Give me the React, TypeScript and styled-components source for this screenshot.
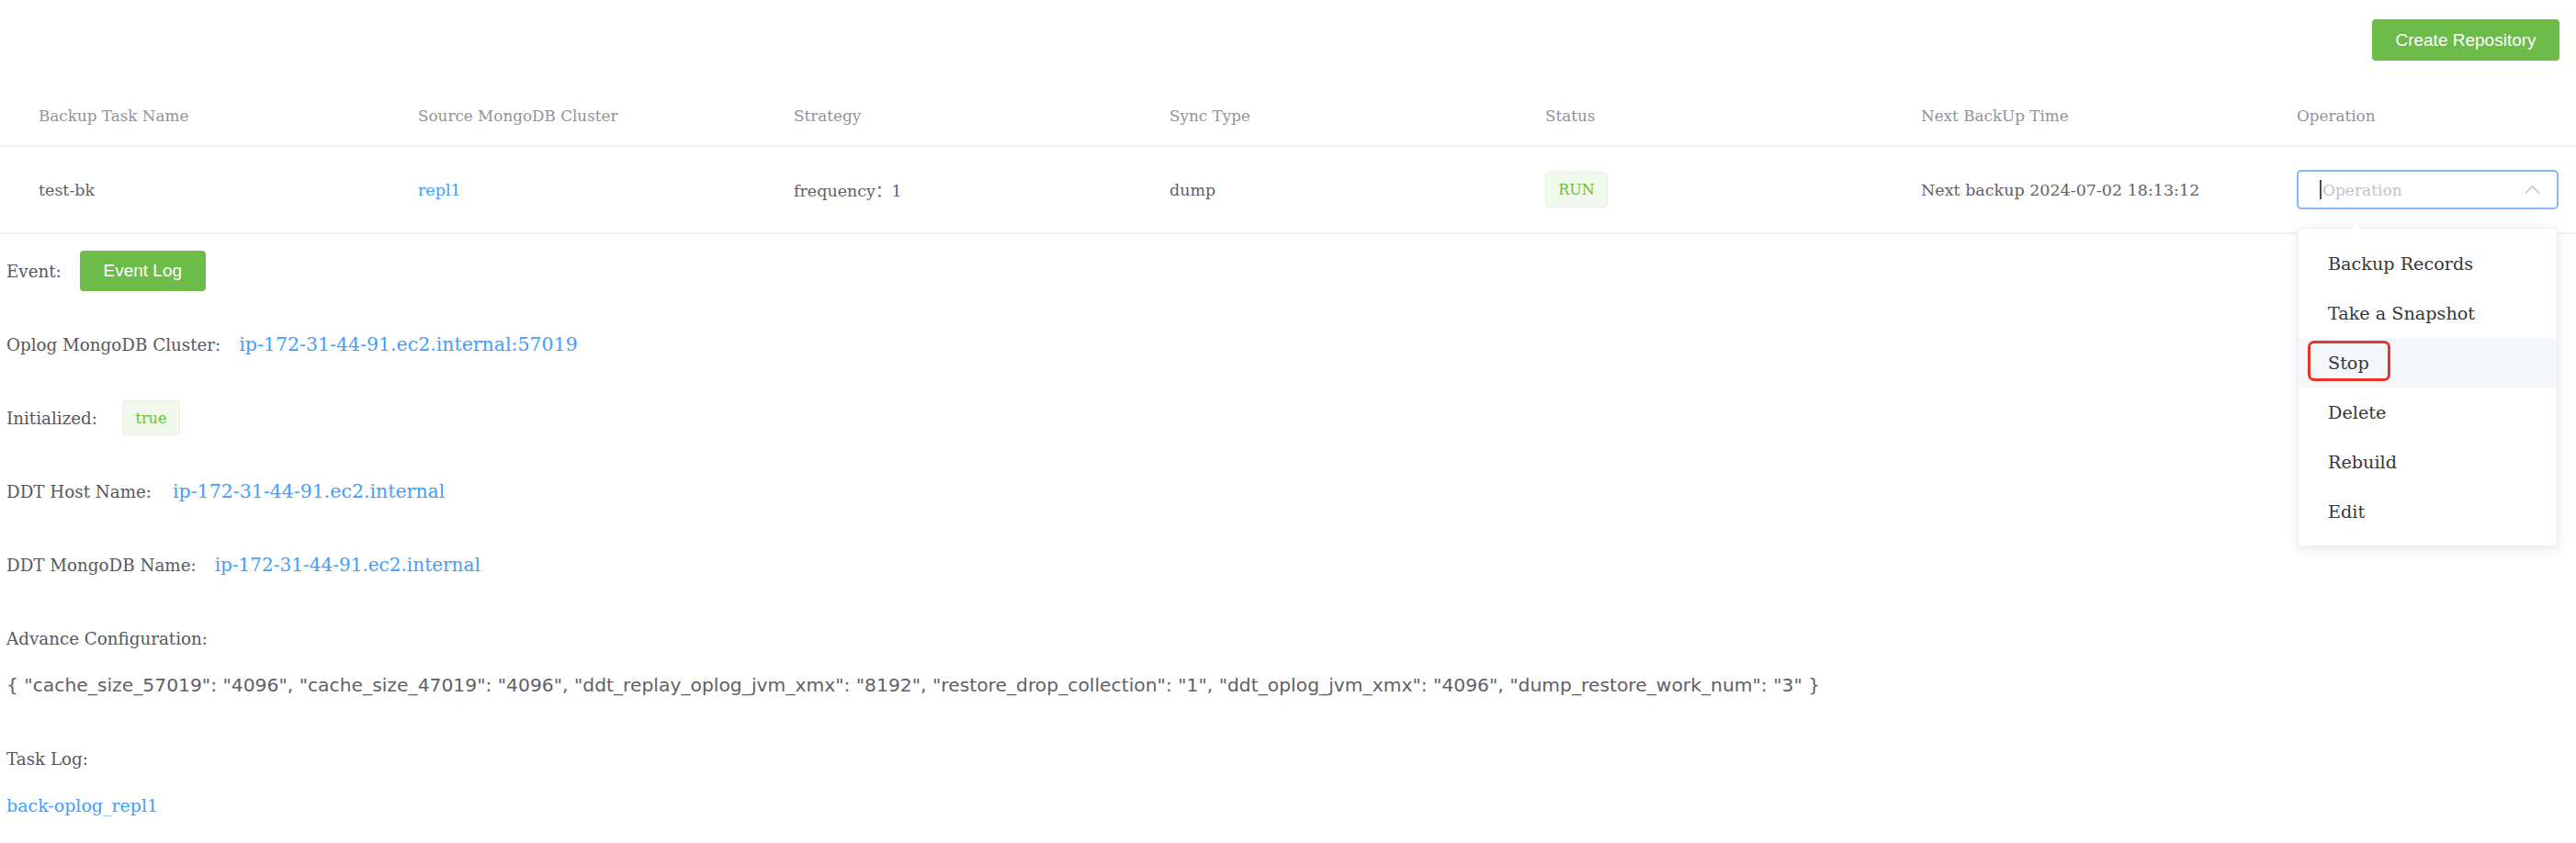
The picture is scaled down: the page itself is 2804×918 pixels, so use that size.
import React from "react";
import styled, { createGlobalStyle } from "styled-components";

const SERIF = `"DejaVu Serif", "Noto Sans CJK SC", serif`;
const SANS = `"Liberation Sans", Arial, sans-serif`;
const JSONFONT = `"DejaVu Sans", "Noto Sans", sans-serif`;

const GlobalStyle = createGlobalStyle`
  html, body { margin: 0; padding: 0; background: #ffffff; }
  body { font-family: ${SERIF}; color: #606266; }
  * { box-sizing: border-box; }
`;

const Page = styled.div`
  width: 2804px;
  min-height: 918px;
`;

const Toolbar = styled.div`
  display: flex;
  justify-content: flex-end;
  padding: 21px 18px 0 0;
  margin-bottom: 28px;
`;

const GreenButton = styled.button<{ $w: number; $h: number }>`
  width: ${(p) => p.$w}px;
  height: ${(p) => p.$h}px;
  display: inline-flex;
  align-items: center;
  justify-content: center;
  padding: 0;
  background: #6dbb49;
  color: #ffffff;
  border: 0;
  border-radius: 4px;
  font-family: ${SANS};
  font-size: 19px;
  cursor: pointer;
`;

const Row = styled.div<{ $head?: boolean }>`
  display: grid;
  grid-template-columns: 413px 409px 409px 409px 409px 409px 1fr;
  align-items: center;
  height: ${(p) => (p.$head ? 66 : 95)}px;
  padding: 0 18px 0 42px;
  border-bottom: 2px solid #eef0f5;
  font-size: ${(p) => (p.$head ? 16.8 : 17.5)}px;
  color: ${(p) => (p.$head ? "#909399" : "#5f6166")};
`;

const Cell = styled.div`
  white-space: nowrap;
`;

const Link = styled.a<{ $size?: number }>`
  color: #409eff;
  text-decoration: none;
  ${(p) => (p.$size ? `font-size: ${p.$size}px;` : "")}
`;

const Tag = styled.span<{ $w: number; $h: number }>`
  display: inline-flex;
  align-items: center;
  justify-content: center;
  width: ${(p) => p.$w}px;
  height: ${(p) => p.$h}px;
  background: #f0f9eb;
  border: 1px solid #e1f3d8;
  border-radius: 4px;
  color: #67c23a;
  font-size: 16px;
`;

const SelectWrap = styled.div`
  position: relative;
  width: 285px;
`;

const SelectBox = styled.div`
  height: 43px;
  border: 2px solid #84b9f5;
  border-radius: 5px;
  display: flex;
  align-items: center;
  justify-content: space-between;
  padding: 0 18px 0 23px;
  background: #fff;
`;

const Placeholder = styled.span`
  display: flex;
  align-items: center;
  color: #c0c4cc;
  font-size: 17px;
`;

const Caret = styled.span`
  width: 2px;
  height: 21px;
  background: #4a4a4a;
  margin-right: 1px;
`;

const Menu = styled.ul`
  position: absolute;
  top: 63px;
  left: 1px;
  width: 283px;
  margin: 0;
  padding: 11px 0 10px;
  list-style: none;
  background: #ffffff;
  border: 1px solid #ebeef5;
  border-radius: 5px;
  box-shadow: 0 3px 14px rgba(0, 0, 0, 0.1);
  z-index: 10;

  &::before {
    content: "";
    position: absolute;
    top: -13px;
    left: 56px;
    border: 6px solid transparent;
    border-bottom: 7px solid #ebeef5;
  }
  &::after {
    content: "";
    position: absolute;
    top: -11px;
    left: 57px;
    border: 5px solid transparent;
    border-bottom: 6px solid #ffffff;
  }
`;

const MenuItem = styled.li<{ $active?: boolean }>`
  position: relative;
  height: 54px;
  display: flex;
  align-items: center;
  padding: 0 32px;
  font-size: 19.2px;
  color: #35363a;
  background: ${(p) => (p.$active ? "#f4f6fa" : "transparent")};
`;

const Annotation = styled.span`
  position: absolute;
  left: 10px;
  top: 3px;
  width: 90px;
  height: 44px;
  border: 3px solid #e53528;
  border-radius: 7px;
`;

const Details = styled.div`
  display: flex;
  flex-direction: column;
  gap: 36px;
  padding: 18px 0 0 7px;
`;

const Field = styled.div`
  display: flex;
  align-items: center;
  min-height: 44px;
  font-size: 18.3px;
  color: #55585e;
  white-space: nowrap;
`;

const Label = styled.span<{ $gap?: number }>`
  margin-right: ${(p) => p.$gap ?? 20}px;
`;

const Block = styled.div`
  display: flex;
  flex-direction: column;
  gap: 7px;
`;

const JsonLine = styled.div`
  display: flex;
  align-items: center;
  height: 44px;
  font-family: ${JSONFONT};
  font-size: 20.3px;
  color: #5f6166;
  white-space: nowrap;
`;

const ChevronUp = () => (
  <svg width="17" height="11" viewBox="0 0 17 11" fill="none">
    <path d="M1 9.5 L8.5 2 L16 9.5" stroke="#c0c4cc" strokeWidth="1.6" />
  </svg>
);

const headers = [
  "Backup Task Name",
  "Source MongoDB Cluster",
  "Strategy",
  "Sync Type",
  "Status",
  "Next BackUp Time",
  "Operation",
];

const menuItems = ["Backup Records", "Take a Snapshot", "Stop", "Delete", "Rebuild", "Edit"];

const config =
  '{ "cache_size_57019": "4096", "cache_size_47019": "4096", "ddt_replay_oplog_jvm_xmx": "8192", "restore_drop_collection": "1", "ddt_oplog_jvm_xmx": "4096", "dump_restore_work_num": "3" }';

export default function App() {
  return (
    <Page>
      <GlobalStyle />
      <Toolbar>
        <GreenButton $w={204} $h={45}>Create Repository</GreenButton>
      </Toolbar>

      <Row $head>
        {headers.map((h) => (
          <Cell key={h}>{h}</Cell>
        ))}
      </Row>
      <Row>
        <Cell>test-bk</Cell>
        <Cell>
          <Link>repl1</Link>
        </Cell>
        <Cell>frequency：1</Cell>
        <Cell>dump</Cell>
        <Cell>
          <Tag $w={68} $h={39}>RUN</Tag>
        </Cell>
        <Cell>Next backup 2024-07-02 18:13:12</Cell>
        <Cell>
          <SelectWrap>
            <SelectBox>
              <Placeholder>
                <Caret />
                Operation
              </Placeholder>
              <ChevronUp />
            </SelectBox>
            <Menu>
              {menuItems.map((m) => (
                <MenuItem key={m} $active={m === "Stop"}>
                  {m}
                  {m === "Stop" && <Annotation />}
                </MenuItem>
              ))}
            </Menu>
          </SelectWrap>
        </Cell>
      </Row>

      <Details>
        <Field>
          <Label>Event:</Label>
          <GreenButton $w={137} $h={44}>Event Log</GreenButton>
        </Field>
        <Field>
          <Label>Oplog MongoDB Cluster:</Label>
          <Link $size={20.5}>ip-172-31-44-91.ec2.internal:57019</Link>
        </Field>
        <Field>
          <Label $gap={27}>Initialized:</Label>
          <Tag $w={63} $h={38}>true</Tag>
        </Field>
        <Field>
          <Label $gap={23}>DDT Host Name:</Label>
          <Link $size={20.5}>ip-172-31-44-91.ec2.internal</Link>
        </Field>
        <Field>
          <Label>DDT MongoDB Name:</Label>
          <Link $size={20}>ip-172-31-44-91.ec2.internal</Link>
        </Field>
        <Block>
          <Field>Advance Configuration:</Field>
          <JsonLine>{config}</JsonLine>
        </Block>
        <Block>
          <Field>Task Log:</Field>
          <Field>
            <Link $size={19}>back-oplog_repl1</Link>
          </Field>
        </Block>
      </Details>
    </Page>
  );
}
